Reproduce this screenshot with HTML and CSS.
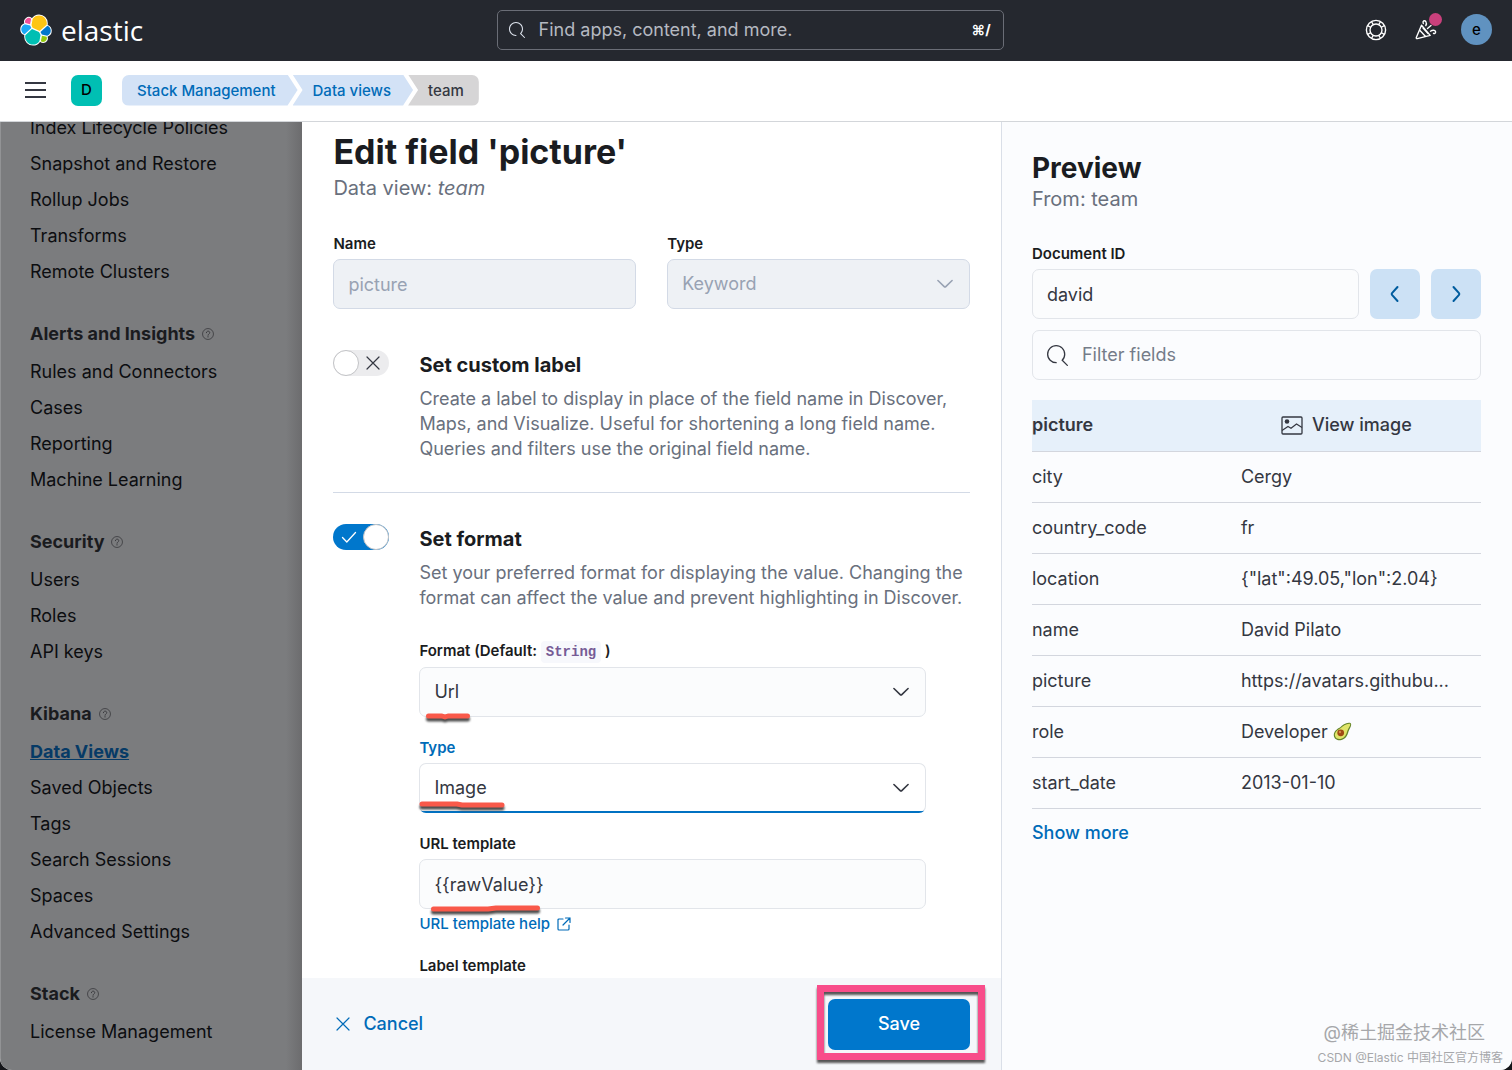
FILE: index.html
```html
<!DOCTYPE html>
<html lang="en">
<head>
  <meta charset="UTF-8">
  <title>Data views - Elastic</title>
  <link rel="stylesheet" href="styles.css">
</head>
<body>
  <!-- shared icons -->
  <svg class="sprite" width="0" height="0">
    <symbol id="i-search" viewBox="0 0 16 16"><path fill="currentColor" d="M11.271 11.978l3.872 3.873a.502.502 0 00.708 0 .502.502 0 000-.708l-3.565-3.564c2.38-2.747 2.267-6.923-.342-9.532-2.73-2.73-7.17-2.73-9.898 0-2.728 2.729-2.728 7.17 0 9.9a6.955 6.955 0 004.949 2.05.5.5 0 000-1 5.96 5.96 0 01-4.242-1.757 6.01 6.01 0 010-8.486 6.004 6.004 0 018.484 0 6.01 6.01 0 010 8.486.5.5 0 00-.034.738z"/></symbol>
    <symbol id="i-help" viewBox="0 0 16 16"><g fill="none" stroke="currentColor"><circle cx="8" cy="8" r="7.3"/><path stroke-linecap="round" stroke-width="1.2" d="M5.8 6.3C5.8 3.4 10.3 3.5 10.3 6.2C10.3 8 8 8 8 9.7"/></g><circle cx="8" cy="11.8" r=".9" fill="currentColor"/></symbol>
    <symbol id="i-down" viewBox="0 0 16 16"><path fill="none" stroke="currentColor" stroke-width="1.4" stroke-linecap="round" stroke-linejoin="round" d="M1.7 4.9L7.3 10.3Q8 11 8.7 10.3L14.3 4.9"/></symbol>
    <symbol id="i-cross" viewBox="0 0 16 16"><path fill="none" stroke="currentColor" stroke-width="1.2" stroke-linecap="round" d="M2 2L14 14M14 2L2 14"/></symbol>
  </svg>

  <div class="app">
    <header class="header">
      <a class="logo" href="#">
        <svg width="32" height="32" viewBox="0 0 32 32">
          <g fill="#fff" stroke="#fff" stroke-width="2" stroke-linejoin="round">
            <path d="M12.58 13.787l7.002 3.211 7.066-6.213a7.849 7.849 0 00.152-1.557c0-4.287-3.464-7.755-7.741-7.755a7.73 7.73 0 00-6.384 3.376l-1.175 6.118 1.08 2.82z"/>
            <path d="M5.333 21.228a7.964 7.964 0 00-.152 1.576c0 4.306 3.483 7.794 7.78 7.794a7.76 7.76 0 006.431-3.433l1.166-6.083-1.556-2.98-7.03-3.208-6.639 6.334z"/>
            <path d="M5.288 9.067l4.8 1.137L11.14 4.73a3.785 3.785 0 00-5.852 4.337z"/>
            <path d="M4.872 10.214c-2.14.711-3.638 2.775-3.638 5.033 0 2.2 1.359 4.163 3.399 4.943l6.735-6.096-1.236-2.645-5.26-1.235z"/>
            <path d="M20.873 27.165a3.764 3.764 0 002.285.776 3.789 3.789 0 003.562-5.093l-4.797-1.124-1.05 5.441z"/>
            <path d="M21.848 20.56l5.28 1.237c2.14-.71 3.639-2.775 3.639-5.034a5.299 5.299 0 00-3.397-4.94l-6.906 6.055 1.384 2.683z"/>
          </g>
          <path fill="#fec514" d="M12.58 13.787l7.002 3.211 7.066-6.213a7.849 7.849 0 00.152-1.557c0-4.287-3.464-7.755-7.741-7.755a7.73 7.73 0 00-6.384 3.376l-1.175 6.118 1.08 2.82z"/>
          <path fill="#00bfb3" d="M5.333 21.228a7.964 7.964 0 00-.152 1.576c0 4.306 3.483 7.794 7.78 7.794a7.76 7.76 0 006.431-3.433l1.166-6.083-1.556-2.98-7.03-3.208-6.639 6.334z"/>
          <path fill="#f04e98" d="M5.288 9.067l4.8 1.137L11.14 4.73a3.785 3.785 0 00-5.852 4.337z"/>
          <path fill="#1ba9f5" d="M4.872 10.214c-2.14.711-3.638 2.775-3.638 5.033 0 2.2 1.359 4.163 3.399 4.943l6.735-6.096-1.236-2.645-5.26-1.235z"/>
          <path fill="#93c90e" d="M20.873 27.165a3.764 3.764 0 002.285.776 3.789 3.789 0 003.562-5.093l-4.797-1.124-1.05 5.441z"/>
          <path fill="#07c" d="M21.848 20.56l5.28 1.237c2.14-.71 3.639-2.775 3.639-5.034a5.299 5.299 0 00-3.397-4.94l-6.906 6.055 1.384 2.683z"/>
        </svg>
        <span>elastic</span>
      </a>

      <label class="search">
        <svg width="16" height="16"><use href="#i-search"/></svg>
        <input type="search" placeholder="Find apps, content, and more." aria-label="Find apps, content, and more.">
        <kbd>⌘/</kbd>
      </label>

      <div class="header-actions">
        <button class="icon-btn" aria-label="Help">
          <svg width="22" height="22" viewBox="0 0 22 22" fill="none" stroke="#fff">
            <circle cx="11" cy="11" r="9.6" stroke-width="1.4"/>
            <circle cx="11" cy="11" r="6" stroke-width="1.4"/>
            <path stroke-width="1.3" d="M8.2 5.6L6.6 2.7M5.6 8.2L2.7 6.6M13.8 5.6L15.4 2.7M16.4 8.2L19.3 6.6M8.2 16.4L6.6 19.3M5.6 13.8L2.7 15.4M13.8 16.4L15.4 19.3M16.4 13.8L19.3 15.4"/>
          </svg>
        </button>
        <button class="icon-btn news" aria-label="What's new">
          <svg width="22" height="22" viewBox="0 0 22 22" fill="none" stroke="#fff" stroke-width="1.4" stroke-linecap="round" stroke-linejoin="round">
            <path d="M6.5 6.2L1.3 18.4Q1 19.7 2.3 19.6L15.2 16.4ZM5 11.5L10.3 17.2M8 9L13 14.5"/>
            <path d="M8.3 4.5C7.2 2 9.6 .8 10.8 2.5C11.6 3.8 11.4 5.4 10.8 6.6M15.5 12.2C17.5 10.7 20.4 10.8 20.6 12.9C20.6 14.5 19.3 14.8 18.5 14.3M12.5 9.5L16 6.5"/>
          </svg>
          <span class="dot"></span>
        </button>
        <button class="avatar" aria-label="Account">e</button>
      </div>
    </header>

    <div class="subheader">
      <button class="menu" aria-label="Toggle menu"><span></span><span></span><span></span></button>
      <button class="space">D</button>
      <nav class="breadcrumbs">
        <a href="#">Stack Management</a>
        <a href="#">Data views</a>
        <span>team</span>
      </nav>
    </div>

    <main class="main">
      <nav class="sidebar">
        <ul>
          <li><a href="#">Index Lifecycle Policies</a></li>
          <li><a href="#">Snapshot and Restore</a></li>
          <li><a href="#">Rollup Jobs</a></li>
          <li><a href="#">Transforms</a></li>
          <li><a href="#">Remote Clusters</a></li>
        </ul>
        <h2>Alerts and Insights <svg width="12" height="12"><use href="#i-help"/></svg></h2>
        <ul>
          <li><a href="#">Rules and Connectors</a></li>
          <li><a href="#">Cases</a></li>
          <li><a href="#">Reporting</a></li>
          <li><a href="#">Machine Learning</a></li>
        </ul>
        <h2>Security <svg width="12" height="12"><use href="#i-help"/></svg></h2>
        <ul>
          <li><a href="#">Users</a></li>
          <li><a href="#">Roles</a></li>
          <li><a href="#">API keys</a></li>
        </ul>
        <h2>Kibana <svg width="12" height="12"><use href="#i-help"/></svg></h2>
        <ul>
          <li><a href="#" class="active">Data Views</a></li>
          <li><a href="#">Saved Objects</a></li>
          <li><a href="#">Tags</a></li>
          <li><a href="#">Search Sessions</a></li>
          <li><a href="#">Spaces</a></li>
          <li><a href="#">Advanced Settings</a></li>
        </ul>
        <h2>Stack <svg width="12" height="12"><use href="#i-help"/></svg></h2>
        <ul>
          <li><a href="#">License Management</a></li>
        </ul>
      </nav>

      <section class="editor">
        <form class="editor-body">
          <h1>Edit field 'picture'</h1>
          <p class="subtitle">Data view: <em>team</em></p>

          <div class="row">
            <div class="field">
              <label for="name">Name</label>
              <input id="name" type="text" value="picture" disabled>
            </div>
            <div class="field">
              <label for="type">Type</label>
              <div class="select">
                <select id="type" disabled><option>Keyword</option></select>
                <svg width="18" height="18"><use href="#i-down"/></svg>
              </div>
            </div>
          </div>

          <div class="setting">
            <div class="switch">
              <input type="checkbox" role="switch" id="custom-label">
              <svg width="16" height="16"><use href="#i-cross"/></svg>
            </div>
            <div class="setting-body">
              <h3><label for="custom-label">Set custom label</label></h3>
              <p>Create a label to display in place of the field name in Discover, Maps, and Visualize. Useful for shortening a long field name. Queries and filters use the original field name.</p>
            </div>
          </div>
          <hr>
          <div class="setting">
            <div class="switch on">
              <input type="checkbox" role="switch" id="set-format" checked>
              <svg width="16" height="16" viewBox="0 0 16 16"><path fill="none" stroke="currentColor" stroke-width="1.3" stroke-linecap="round" stroke-linejoin="round" d="M1.5 8.5L5.8 13L14.5 3.5"/></svg>
            </div>
            <div class="setting-body">
              <h3><label for="set-format">Set format</label></h3>
              <p>Set your preferred format for displaying the value. Changing the format can affect the value and prevent highlighting in Discover.</p>

              <div class="field first">
                <label for="format">Format (Default: <code>String</code> )</label>
                <div class="select">
                  <select id="format"><option>Url</option></select>
                  <svg width="18" height="18"><use href="#i-down"/></svg>
                  <svg class="mark mark-url" width="46" height="12" viewBox="0 0 46 12"><path d="M3.5 4H17L20 5L23 4H42.500"/></svg>
                </div>
              </div>
              <div class="field focused">
                <label for="url-type">Type</label>
                <div class="select">
                  <select id="url-type"><option>Image</option></select>
                  <svg width="18" height="18"><use href="#i-down"/></svg>
                  <svg class="mark mark-image" width="90" height="12" viewBox="0 0 90 12"><path d="M3 4H38L43 5H83"/></svg>
                </div>
              </div>
              <div class="field">
                <label for="url-template">URL template</label>
                <div class="select">
                  <input id="url-template" type="text" value="{{rawValue}}">
                  <svg class="mark mark-raw" width="114" height="12" viewBox="0 0 114 12"><path d="M3.5 5H58L66 4H107.5"/></svg>
                </div>
                <a class="help" href="#">URL template help
                  <svg width="14" height="14" viewBox="0 0 14 14" fill="none" stroke="currentColor" stroke-width="1.2" stroke-linecap="round" stroke-linejoin="round"><path d="M6 2H2Q1 2 1 3V12Q1 13 2 13H11Q12 13 12 12V8M8.5 1H13V5.5M13 1L6 8"/></svg>
                </a>
              </div>
              <div class="field">
                <label for="label-template">Label template</label>
                <input id="label-template" type="text">
              </div>
            </div>
          </div>
        </form>

        <footer class="editor-footer">
          <button class="cancel"><svg width="16" height="16"><use href="#i-cross"/></svg>Cancel</button>
          <div class="save-wrap"><button class="save">Save</button></div>
        </footer>
      </section>

      <aside class="preview">
        <h2>Preview</h2>
        <p class="subtitle">From: team</p>
        <div class="field">
          <label for="doc-id">Document ID</label>
          <div class="doc-row">
            <input id="doc-id" type="text" value="david">
            <button class="arrow" aria-label="Previous"><svg width="18" height="18" viewBox="0 0 18 18"><path d="M11.5 2L6 8.2Q5.3 9 6 9.8L11.5 16"/></svg></button>
            <button class="arrow" aria-label="Next"><svg width="18" height="18" viewBox="0 0 18 18"><path d="M6.5 2L12 8.2Q12.7 9 12 9.8L6.5 16"/></svg></button>
          </div>
        </div>
        <label class="filter">
          <svg width="21" height="21"><use href="#i-search"/></svg>
          <input type="search" placeholder="Filter fields" aria-label="Filter fields">
        </label>
        <table>
          <tbody>
            <tr class="pinned">
              <th>picture</th>
              <td><button class="view-image"><svg width="22" height="19" viewBox="0 0 22 19"><rect x="1" y="1" width="20" height="17" rx="1" fill="none" stroke="currentColor" stroke-width="1.3"/><circle cx="6" cy="5.5" r="2.3" fill="currentColor"/><path fill="none" stroke="currentColor" stroke-width="1.2" d="M1 14.5L7 10.5L10 12.2L15.5 8L21 11.5"/></svg>View image</button></td>
            </tr>
            <tr><th>city</th><td>Cergy</td></tr>
            <tr><th>country_code</th><td>fr</td></tr>
            <tr><th>location</th><td>{"lat":49.05,"lon":2.04}</td></tr>
            <tr><th>name</th><td>David Pilato</td></tr>
            <tr><th>picture</th><td>https://avatars.githubu...</td></tr>
            <tr>
              <th>role</th>
              <td>Developer
                <svg class="avocado" width="19" height="19" viewBox="0 0 19 19"><path d="M17.5 1C13.500 0 9.5 3 7 5.5C3.5 7 .5 10 .8 13.5C1.2 17.5 5 18.800 8.5 18C12.500 17 14.500 13.500 15.500 9.500C16.500 6.500 19.500 3 17.500 1Z" fill="#64852a"/><path d="M17 1.700C13.500 1.200 9.800 4 7.500 6.200C4.200 7.800 1.700 10.500 1.900 13.200C2.300 16.600 5.500 17.500 8.200 16.800C11.700 15.800 13.300 12.700 14.300 9C15.300 6 18 3.300 17 1.700Z" fill="#e0e56a"/><circle cx="7.700" cy="10.800" r="3.400" fill="#a04a14"/><circle cx="7" cy="10" r="1.200" fill="#d08a4a"/></svg>
              </td>
            </tr>
            <tr><th>start_date</th><td>2013-01-10</td></tr>
          </tbody>
        </table>
        <button class="more">Show more</button>
      </aside>
    </main>

    <div class="watermark">
      <span class="big">@稀土掘金技术社区</span>
      <span>CSDN @Elastic 中国社区官方博客</span>
    </div>
  </div>
</body>
</html>
```
FILE: styles.css
```css
* { box-sizing: border-box; }
body {
  margin: 0; background: #15161a; color: #343741;
  font-family: Inter, "Noto Sans CJK SC", sans-serif;
  font-size: 18px; line-height: 26px;
}
h1, h2, h3, p, ul { margin: 0; padding: 0; }
h1, h2, h3 { color: #1a1c21; }
ul { list-style: none; }
a { color: #006bb8; text-decoration: none; }
svg { display: block; flex: none; }
button, input, select { font: inherit; color: inherit; }
button { border: 0; padding: 0; background: none; cursor: pointer; }
button:focus, input:focus, select:focus { outline: none; }
.sprite { position: absolute; }

.app {
  position: relative; display: flex; flex-direction: column; height: 100vh;
  overflow: hidden; border-radius: 0 0 12px 12px; background: #fff;
}

/* header */
.header {
  flex: none; display: flex; justify-content: space-between; align-items: center;
  height: 61px; padding: 0 20px 2px; background: #25282f;
}
.logo { display: flex; align-items: center; gap: 9px; }
.logo span {
  color: #fff; font-family: "Open Sans", sans-serif; font-size: 28px; line-height: 36px;
}
.search {
  display: flex; align-items: center; flex: 0 1 507px; height: 40px;
  padding: 0 12px 0 11px; border: 1px solid #6a6d76; border-radius: 5px; color: #dfe5ef;
}
.search input {
  flex: 1; min-width: 0; margin-left: 14px; padding: 0; border: 0; background: none;
}
.search input::placeholder { color: #b5b9c1; opacity: 1; }
.search kbd { font-family: inherit; font-size: 14px; font-weight: 700; color: #fff; }
.header-actions { display: flex; align-items: center; gap: 28px; padding-left: 8px; }
.icon-btn { position: relative; }
.news .dot {
  position: absolute; top: -6px; right: -5px; width: 13px; height: 13px;
  border-radius: 50%; background: #c9407c;
}
.news { margin-right: -4px; }
.avatar {
  width: 31px; height: 31px; border-radius: 50%; background: #6092c0;
  color: #000; font-size: 15px; font-weight: 500;
}

/* breadcrumb bar */
.subheader {
  flex: none; display: flex; align-items: center; height: 61px; padding: 0 25px 2px;
  border-bottom: 1px solid #d3d6da;
}
.menu { display: flex; flex-direction: column; gap: 5px; width: 21px; }
.menu span { height: 2px; background: #343741; }
.space {
  width: 31px; height: 31px; margin: 0 20px 0 25px; border-radius: 7px;
  background: #00bfb3; color: #000; font-size: 15px; font-weight: 500;
}
.breadcrumbs { display: flex; font-size: 15px; font-weight: 500; line-height: 31px; }
.breadcrumbs > * {
  padding: 0 22px 0 20px; margin-left: -5px; background: #d3e2f6;
  clip-path: polygon(0 0, calc(100% - 10px) 0, 100% 50%, calc(100% - 10px) 100%, 0 100%, 10px 50%);
}
.breadcrumbs > :first-child {
  padding-left: 15px; margin-left: 0; border-radius: 7px 0 0 7px;
  clip-path: polygon(0 0, calc(100% - 10px) 0, 100% 50%, calc(100% - 10px) 100%, 0 100%);
}
.breadcrumbs > :last-child {
  padding-right: 15px; background: #d6d5d6; border-radius: 0 7px 7px 0;
  clip-path: polygon(0 0, 100% 0, 100% 100%, 0 100%, 10px 50%);
}

.main {
  flex: 1; min-height: 0; display: grid; grid-template-columns: 20% 1fr 33.8%;
}

/* dimmed side nav behind the flyout */
.sidebar {
  overflow: hidden; padding-left: 29px; border-left: 1px solid #929395;
  background: linear-gradient(to left, #6c6c6e, #7b7c7e 16px);
}
.sidebar ul:first-child { margin-top: -12px; }
.sidebar li { line-height: 36px; }
.sidebar a { color: #0c0d10; }
.sidebar a.active { color: #063a66; font-weight: 700; text-decoration: underline; }
.sidebar h2 {
  display: flex; align-items: center; gap: 7px; margin: 26px 0 2px;
  color: #1a1b1e; font-size: 18px; line-height: 36px;
}
.sidebar h2 svg { color: #35363a; }

/* flyout, left part */
.editor { display: flex; flex-direction: column; min-height: 0; min-width: 0; background: #fff; }
.editor-body { flex: 1; min-height: 0; overflow: hidden; padding: 9px 31px 0; }
h1 { font-size: 34px; line-height: 42px; }
.subtitle { color: #69707d; font-size: 20px; line-height: 30px; }
.row { display: grid; grid-template-columns: 1fr 1fr; gap: 31px; margin-top: 30px; }
.field label {
  display: block; margin-bottom: 4px; color: #1a1c21;
  font-size: 15px; font-weight: 600; line-height: 22px;
}
.field input, .select select {
  display: block; width: 100%; height: 50px; padding: 0 14px; appearance: none;
  border: 1px solid #e2e5ea; border-radius: 7px; background: #fbfcfd;
}
.field input:disabled, .select select:disabled {
  border-color: #d3dae6; background: #eef1f5; color: #98a2b3; opacity: 1;
}
.select { position: relative; }
.select > svg:not(.mark) {
  position: absolute; top: 16px; right: 16px; pointer-events: none;
}
.select select:disabled + svg { color: #98a2b3; }

.setting { display: flex; gap: 30px; margin-top: 41px; }
.switch { position: relative; flex: none; width: 56px; height: 26px; }
.switch input {
  display: block; width: 56px; height: 26px; margin: 0; border: 0; appearance: none;
  border-radius: 13px; background: #ececee;
}
.switch input::before {
  content: ""; display: block; width: 26px; height: 26px; border: 1px solid #c2c3c6;
  box-sizing: border-box; border-radius: 50%; background: #fff;
}
.switch input:checked { background: #07c; }
.switch input:checked::before { margin-left: 30px; }
.switch svg { position: absolute; top: 5px; right: 8px; pointer-events: none; }
.switch.on svg { right: 32px; color: #fff; }
.setting-body { flex: 1; min-width: 0; }
.setting h3 { font-size: 20px; line-height: 30px; }
.setting-body > p { margin-top: 6px; color: #69707d; line-height: 25px; }
hr { height: 1px; margin: 31px 0 0; border: 0; background: #d3dae6; }
hr + .setting { margin-top: 31px; }
.setting-body .field { max-width: 507px; margin-top: 20px; }
.setting-body .first { margin-top: 30px; }
.field code {
  padding: 3px 5px; border-radius: 4px; background: #f7f8fc; color: #765b96;
  font-family: "Liberation Mono", monospace; font-size: 14px; font-weight: 700;
}
.focused label { color: #006bb8; }
.focused select {
  background: #fff linear-gradient(#0071c2, #0071c2) bottom / 100% 1px no-repeat;
  border-bottom-color: #0071c2;
}
.help {
  display: flex; align-items: center; gap: 7px; margin-top: 4px;
  font-size: 15px; font-weight: 500; line-height: 22px;
}

/* hand-drawn underlines */
.mark {
  position: absolute; pointer-events: none; overflow: visible;
  filter: drop-shadow(0 3px 1px #4c4c4c);
}
.mark path { fill: none; stroke: #f9594a; stroke-width: 5; stroke-linecap: round; stroke-linejoin: round; }
.mark-url { left: 6px; top: 45px; }
.mark-image { left: 0; top: 37px; }
.mark-raw { left: 11px; top: 45px; }

.editor-footer {
  flex: none; display: flex; justify-content: space-between; align-items: center;
  height: 92px; padding: 0 31px; background: #f5f7fa;
}
.cancel { display: flex; align-items: center; gap: 12px; padding-left: 2px; color: #006bb8; font-weight: 500; }
.save-wrap { position: relative; }
.save {
  display: block; width: 142px; height: 51px; border-radius: 7px;
  background: #07c; color: #fff; font-weight: 500;
}
.save-wrap::after {
  content: ""; position: absolute; inset: -14px -15px -10px -11px; pointer-events: none;
  border: 7px solid #f84d8a; filter: drop-shadow(0 3px 1px #555);
}

/* flyout, right part */
.preview {
  min-width: 0; overflow: hidden; padding: 29px 31px 0 30px;
  border-left: 1px solid #dadfe8; background: #fbfcfe;
}
.preview h2 { font-size: 28px; line-height: 34px; }
.preview .subtitle { line-height: 28px; }
.preview .field { margin-top: 30px; }
.doc-row { display: flex; gap: 11px; }
.doc-row input { flex: 1; min-width: 0; }
.arrow { flex: none; width: 50px; height: 50px; border-radius: 7px; background: #cce1f5; }
.arrow svg { margin: 0 auto; fill: none; stroke: #005c9e; stroke-width: 2; stroke-linecap: round; }
.filter {
  display: flex; align-items: center; height: 50px; margin: 11px 0 20px; padding: 0 14px;
  border: 1px solid #e2e5ea; border-radius: 7px;
}
.filter input {
  flex: 1; min-width: 0; margin-left: 14px; padding: 0; border: 0; background: none;
}
.filter input::placeholder { color: #757c89; opacity: 1; }
table { width: 100%; border-collapse: collapse; table-layout: fixed; }
th, td {
  height: 51px; padding: 0; border-bottom: 1px solid #d3d6de;
  font-weight: 400; text-align: left; white-space: nowrap;
}
th { width: 209px; }
.pinned { background: #e6f0fa; }
.pinned th { font-weight: 600; }
.view-image { display: flex; align-items: center; gap: 9px; margin-left: 40px; font-weight: 500; }
.avocado { display: inline-block; vertical-align: -3px; }
.more { display: block; margin-top: 11px; color: #006bb8; font-weight: 500; }

.watermark {
  position: absolute; right: 9px; bottom: 2px; display: flex; flex-direction: column;
  align-items: flex-end; color: #a6a7aa; font-size: 12px; line-height: 20px;
}
.watermark .big { margin-right: 18px; font-size: 18px; line-height: 30px; }
```
